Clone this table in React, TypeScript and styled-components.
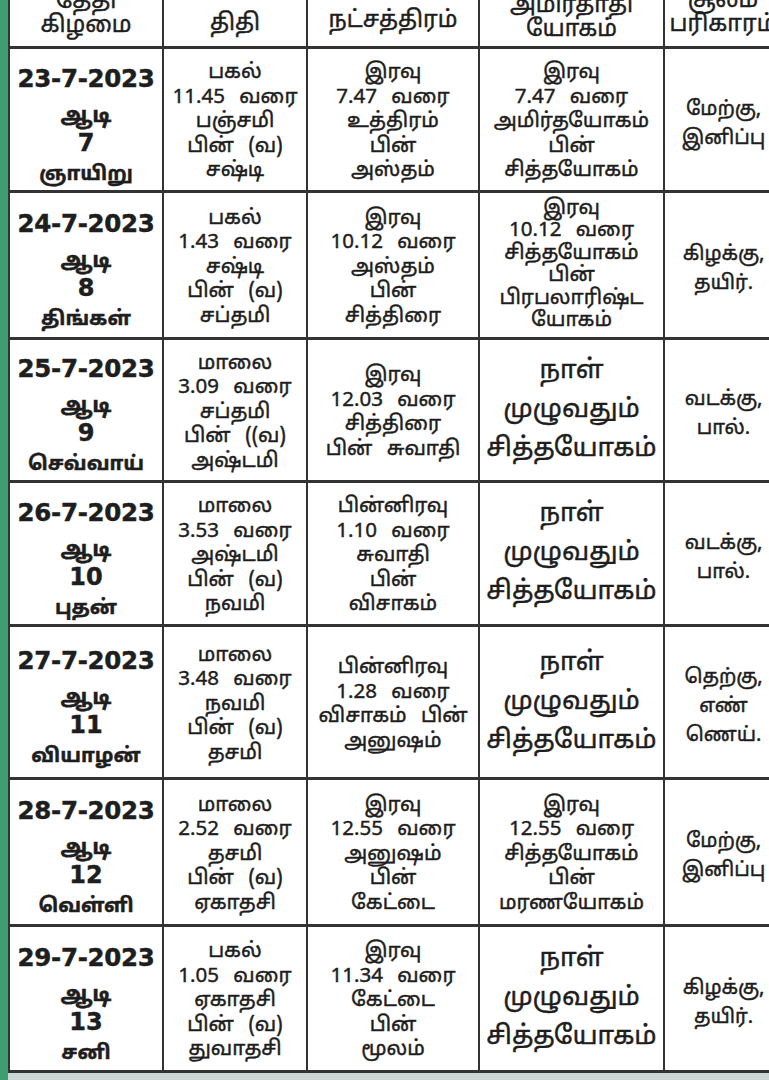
import { FC } from "react";
import styled, { createGlobalStyle } from "styled-components";

const GlobalStyle = createGlobalStyle`
  html, body {
    margin: 0;
    padding: 0;
    background: #c9d6d3;
  }
  body {
    font-family: "Noto Sans Tamil", "Lohit Tamil", "Latha", "DejaVu Sans", "Noto Sans", sans-serif;
    color: #1e1e1e;
  }
`;

const Page = styled.div`
  width: 769px;
  height: 1080px;
  overflow: hidden;
  background: #c9d6d3;
  border-left: 8px solid #3f9d72;
  box-sizing: border-box;
`;

const Table = styled.table`
  border-collapse: collapse;
  table-layout: fixed;
  width: 773px;
  margin-top: -14px;
  background: #fff;
  border-left: 2px solid #333;
  border-bottom: 3px solid #333;
  -webkit-text-stroke: 0.45px #1e1e1e;
`;

const HeadCell = styled.th<{ $pb: number }>`
  border-right: 2px solid #333;
  border-bottom: 3px solid #333;
  font-weight: normal;
  font-size: 23px;
  line-height: 24px;
  height: ${(p) => 60 - p.$pb}px;
  padding: 0 0 ${(p) => p.$pb}px;
  vertical-align: bottom;
  text-align: center;
  white-space: nowrap;
`;

const Row = styled.tr<{ $h: number }>`
  height: ${(p) => p.$h}px;
  border-bottom: 3px solid #333;
`;

type Kind = "big" | "tight" | "normal";

const Cell = styled.td<{ $kind: Kind }>`
  border-right: 2px solid #333;
  padding: ${(p) => (p.$kind === "normal" ? "6px 2px 0" : "0 2px")};
  text-align: center;
  vertical-align: middle;
  font-size: ${(p) => (p.$kind === "big" ? "26px" : "20.5px")};
  line-height: ${(p) =>
    p.$kind === "big" ? "39px" : p.$kind === "tight" ? "22.5px" : "24.5px"};
  word-spacing: 9px;
`;

const DateCell = styled.td`
  border-right: 2px solid #333;
  padding: 12px 0 0;
  text-align: center;
  vertical-align: middle;
  font-weight: bold;
`;

const DateLine = styled.div`
  font-family: "DejaVu Sans", sans-serif;
  font-size: 24.5px;
  line-height: 30px;
  letter-spacing: -0.3px;
`;

const MonthLine = styled.div`
  font-size: 22px;
  line-height: 26px;
  margin-top: 10px;
`;

const NumLine = styled.div`
  font-family: "DejaVu Sans", sans-serif;
  font-size: 24px;
  line-height: 26px;
`;

const DayLine = styled.div`
  font-size: 20px;
  line-height: 26px;
  margin-top: 6px;
`;

const Line = styled.div`
  white-space: nowrap;
`;

const SideCell = styled.td`
  padding: 10px 0 0;
  text-align: center;
  vertical-align: middle;
  font-size: 20px;
  line-height: 29px;
`;

interface IDay {
  date: string;
  num: string;
  day: string;
  h: number;
  thithi: string[];
  star: string[];
  yogam: string[];
  side: string[];
}

const full = ["நாள்", "முழுவதும்", "சித்தயோகம்"];

const days: IDay[] = [
  {
    date: "23-7-2023",
    num: "7",
    day: "ஞாயிறு",
    h: 144,
    thithi: ["பகல்", "11.45 வரை", "பஞ்சமி", "பின் (வ)", "சஷ்டி"],
    star: ["இரவு", "7.47 வரை", "உத்திரம்", "பின்", "அஸ்தம்"],
    yogam: ["இரவு", "7.47 வரை", "அமிர்தயோகம்", "பின்", "சித்தயோகம்"],
    side: ["மேற்கு,", "இனிப்பு"],
  },
  {
    date: "24-7-2023",
    num: "8",
    day: "திங்கள்",
    h: 147,
    thithi: ["பகல்", "1.43 வரை", "சஷ்டி", "பின் (வ)", "சப்தமி"],
    star: ["இரவு", "10.12 வரை", "அஸ்தம்", "பின்", "சித்திரை"],
    yogam: ["இரவு", "10.12 வரை", "சித்தயோகம்", "பின்", "பிரபலாரிஷ்ட", "யோகம்"],
    side: ["கிழக்கு,", "தயிர்."],
  },
  {
    date: "25-7-2023",
    num: "9",
    day: "செவ்வாய்",
    h: 143,
    thithi: ["மாலை", "3.09 வரை", "சப்தமி", "பின் ((வ)", "அஷ்டமி"],
    star: ["இரவு", "12.03 வரை", "சித்திரை", "பின் சுவாதி"],
    yogam: full,
    side: ["வடக்கு,", "பால்."],
  },
  {
    date: "26-7-2023",
    num: "10",
    day: "புதன்",
    h: 144,
    thithi: ["மாலை", "3.53 வரை", "அஷ்டமி", "பின் (வ)", "நவமி"],
    star: ["பின்னிரவு", "1.10 வரை", "சுவாதி", "பின்", "விசாகம்"],
    yogam: full,
    side: ["வடக்கு,", "பால்."],
  },
  {
    date: "27-7-2023",
    num: "11",
    day: "வியாழன்",
    h: 153,
    thithi: ["மாலை", "3.48 வரை", "நவமி", "பின் (வ)", "தசமி"],
    star: ["பின்னிரவு", "1.28 வரை", "விசாகம் பின்", "அனுஷம்"],
    yogam: full,
    side: ["தெற்கு,", "எண்", "ணெய்."],
  },
  {
    date: "28-7-2023",
    num: "12",
    day: "வெள்ளி",
    h: 147,
    thithi: ["மாலை", "2.52 வரை", "தசமி", "பின் (வ)", "ஏகாதசி"],
    star: ["இரவு", "12.55 வரை", "அனுஷம்", "பின்", "கேட்டை"],
    yogam: ["இரவு", "12.55 வரை", "சித்தயோகம்", "பின்", "மரணயோகம்"],
    side: ["மேற்கு,", "இனிப்பு"],
  },
  {
    date: "29-7-2023",
    num: "13",
    day: "சனி",
    h: 146,
    thithi: ["பகல்", "1.05 வரை", "ஏகாதசி", "பின் (வ)", "துவாதசி"],
    star: ["இரவு", "11.34 வரை", "கேட்டை", "பின்", "மூலம்"],
    yogam: full,
    side: ["கிழக்கு,", "தயிர்."],
  },
];

const kindOf = (items: string[]): Kind =>
  items === full ? "big" : items.length > 5 ? "tight" : "normal";

const Lines: FC<{ items: string[] }> = ({ items }) => (
  <>
    {items.map((t, i) => (
      <Line key={i}>{t}</Line>
    ))}
  </>
);

const App: FC = () => {
  return (
    <>
      <GlobalStyle />
      <Page>
        <Table>
          <colgroup>
            <col style={{ width: 154 }} />
            <col style={{ width: 144 }} />
            <col style={{ width: 172 }} />
            <col style={{ width: 185 }} />
            <col style={{ width: 118 }} />
          </colgroup>
          <thead>
            <tr>
              <HeadCell $pb={7}>
                <Lines items={["தேதி", "கிழமை"]} />
              </HeadCell>
              <HeadCell $pb={9}>திதி</HeadCell>
              <HeadCell $pb={12}>நட்சத்திரம்</HeadCell>
              <HeadCell $pb={3}>
                <Lines items={["அமிர்தாதி", "யோகம்"]} />
              </HeadCell>
              <HeadCell $pb={8}>
                <Lines items={["சூலம்", "பரிகாரம்"]} />
              </HeadCell>
            </tr>
          </thead>
          <tbody>
            {days.map((d) => (
              <Row key={d.date} $h={d.h}>
                <DateCell>
                  <DateLine>{d.date}</DateLine>
                  <MonthLine>ஆடி</MonthLine>
                  <NumLine>{d.num}</NumLine>
                  <DayLine>{d.day}</DayLine>
                </DateCell>
                <Cell $kind={kindOf(d.thithi)}>
                  <Lines items={d.thithi} />
                </Cell>
                <Cell $kind={kindOf(d.star)}>
                  <Lines items={d.star} />
                </Cell>
                <Cell $kind={kindOf(d.yogam)}>
                  <Lines items={d.yogam} />
                </Cell>
                <SideCell>
                  <Lines items={d.side} />
                </SideCell>
              </Row>
            ))}
          </tbody>
        </Table>
      </Page>
    </>
  );
};

export default App;
